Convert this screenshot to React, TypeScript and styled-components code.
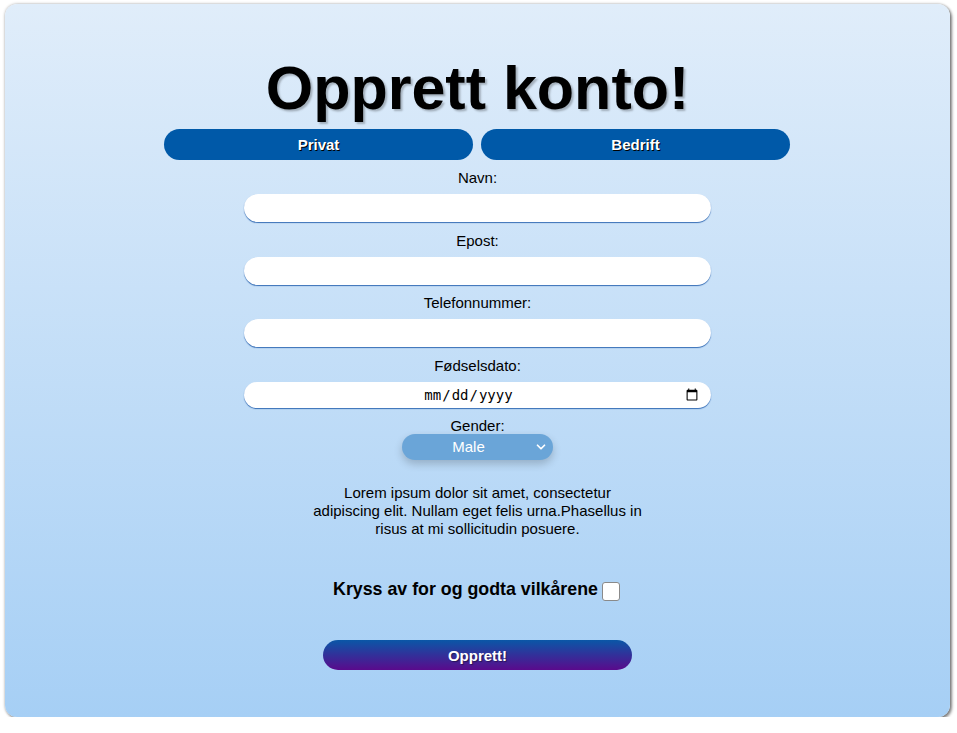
import React, { useState } from "react";
import styled, { createGlobalStyle } from "styled-components";
import { ChevronDown } from "lucide-react";

const Global = createGlobalStyle`
  html, body { margin: 0; padding: 0; background: #ffffff; }
  body { font-family: "Liberation Sans", Arial, sans-serif; color: #000; }
  * { box-sizing: border-box; }
`;

const Card = styled.main`
  margin: 4px 0 0 5px;
  width: 945px;
  height: 713px;
  border-radius: 12px;
  background: linear-gradient(180deg, #e0edfa 0%, #a6cff5 100%);
  box-shadow: 0 0 3px rgba(0, 0, 0, 0.35), 2px 2px 3px rgba(0, 0, 0, 0.45);
  display: flex;
  flex-direction: column;
  align-items: center;
  padding-top: 54px;
`;

const Title = styled.h1`
  margin: 0 0 10px;
  font-size: 61px;
  line-height: 61px;
  font-weight: 700;
  text-shadow: 2px 2px 2px rgba(0, 0, 0, 0.25);
`;

const Tabs = styled.div`
  display: flex;
  gap: 8px;
  margin-right: 1px;
`;

const Tab = styled.button`
  width: 309px;
  height: 31px;
  border: none;
  border-radius: 16px;
  background: #0059a8;
  color: #fff;
  font-family: "Liberation Sans", Arial, sans-serif;
  font-weight: 700;
  font-size: 15px;
  text-shadow: 1px 1px 0 #000;
  cursor: pointer;
`;

const Form = styled.form`
  display: flex;
  flex-direction: column;
  align-items: center;
  margin-top: 9px;
`;

const Label = styled.label<{ $gap?: number }>`
  font-size: 15px;
  line-height: 17px;
  margin-bottom: ${(p) => p.$gap ?? 8}px;
  text-align: center;
`;

const TextInput = styled.input<{ $h?: number }>`
  width: 467px;
  height: ${(p) => p.$h ?? 28}px;
  margin-bottom: 9.5px;
  border: none;
  border-radius: 14px;
  background: #fff;
  box-shadow: 0 1px 1px rgba(30, 90, 170, 0.85);
  outline: none;
  padding: 0 10px;
  font-size: 14px;
  font-family: "DejaVu Sans Mono", monospace;
  text-align: center;
  color: #000;
`;

const SelectWrap = styled.div`
  position: relative;
  width: 151px;
  height: 26px;
  border-radius: 13px;
  background: #6aa5d8;
  box-shadow: 0 4px 9px rgba(0, 0, 0, 0.2);
  margin-bottom: 24px;
`;

const Select = styled.select`
  appearance: none;
  width: 100%;
  height: 100%;
  border: none;
  background: transparent;
  color: #fff;
  font-family: "Liberation Sans", Arial, sans-serif;
  font-size: 15px;
  text-align: center;
  text-align-last: center;
  padding: 0 18px 1px 0;
  outline: none;
`;

const Chevron = styled.span`
  position: absolute;
  right: 5px;
  top: 6px;
  display: flex;
  color: #fff;
  pointer-events: none;
`;

const Lorem = styled.p`
  width: 336px;
  margin: 0 0 40px;
  font-size: 15px;
  line-height: 18px;
  text-align: center;
`;

const TermsRow = styled.div`
  display: flex;
  align-items: center;
  gap: 4px;
  height: 22px;
  margin-bottom: 40px;
  margin-right: 2px;
`;

const TermsText = styled.span`
  font-size: 17.8px;
  font-weight: 700;
  line-height: 22px;
`;

const Check = styled.input`
  appearance: none;
  width: 18px;
  height: 19px;
  margin: 4px 0 0;
  background: #fff;
  border: 1px solid #8a8a8a;
  border-radius: 3px;
`;

const Submit = styled.button`
  width: 309px;
  height: 30px;
  border: none;
  border-radius: 15px;
  background: linear-gradient(180deg, #0a57a7 0%, #5a0a8c 100%);
  color: #fff;
  font-family: "Liberation Sans", Arial, sans-serif;
  font-weight: 700;
  font-size: 15px;
  text-shadow: 1px 1px 1px rgba(0, 0, 0, 0.4);
  cursor: pointer;
`;

export default function App() {
  const [gender, setGender] = useState("male");
  return (
    <>
      <Global />
      <Card>
        <Title>Opprett konto!</Title>
        <Tabs>
          <Tab type="button">Privat</Tab>
          <Tab type="button">Bedrift</Tab>
        </Tabs>
        <Form onSubmit={(e) => e.preventDefault()}>
          <Label htmlFor="navn">Navn:</Label>
          <TextInput id="navn" type="text" />
          <Label htmlFor="epost">Epost:</Label>
          <TextInput id="epost" type="email" />
          <Label htmlFor="tlf">Telefonnummer:</Label>
          <TextInput id="tlf" type="tel" />
          <Label htmlFor="dob">Fødselsdato:</Label>
          <TextInput id="dob" type="date" $h={26} />
          <Label htmlFor="gender" $gap={0}>Gender:</Label>
          <SelectWrap>
            <Select id="gender" value={gender} onChange={(e) => setGender(e.target.value)}>
              <option value="male">Male</option>
              <option value="female">Female</option>
              <option value="other">Other</option>
            </Select>
            <Chevron>
              <ChevronDown size={14} strokeWidth={3} />
            </Chevron>
          </SelectWrap>
          <Lorem>
            Lorem ipsum dolor sit amet, consectetur adipiscing elit. Nullam eget felis urna.Phasellus in risus at mi sollicitudin posuere.
          </Lorem>
          <TermsRow>
            <TermsText>Kryss av for og godta vilkårene</TermsText>
            <Check type="checkbox" />
          </TermsRow>
          <Submit type="submit">Opprett!</Submit>
        </Form>
      </Card>
    </>
  );
}
